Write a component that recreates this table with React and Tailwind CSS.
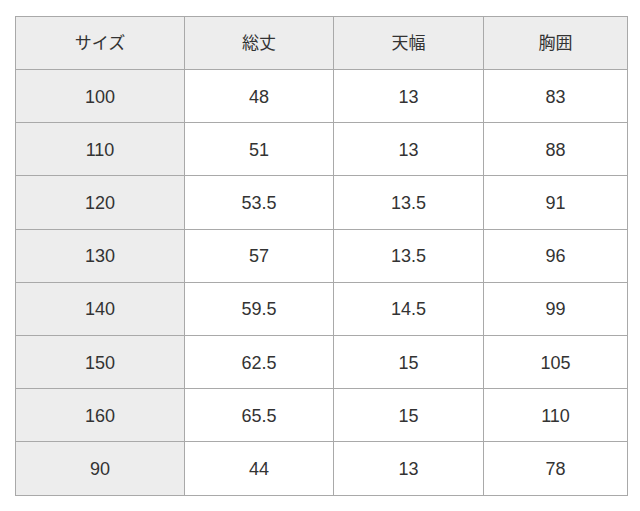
const headers = ['サイズ', '総丈', '天幅', '胸囲'];

const rows = [
  ['100', '48', '13', '83'],
  ['110', '51', '13', '88'],
  ['120', '53.5', '13.5', '91'],
  ['130', '57', '13.5', '96'],
  ['140', '59.5', '14.5', '99'],
  ['150', '62.5', '15', '105'],
  ['160', '65.5', '15', '110'],
  ['90', '44', '13', '78'],
];

export default function App() {
  return (
    <div
      className="w-[640px] h-[511px] bg-white pt-[16px] pl-[15px]"
      style={{ fontFamily: '"Liberation Sans", "Noto Sans CJK JP", sans-serif' }}
    >
      <table className="w-[612px] border-collapse table-fixed text-[18px] text-[#333]">
        <colgroup>
          <col className="w-[169px]" />
          <col className="w-[149px]" />
          <col className="w-[150px]" />
          <col className="w-[144px]" />
        </colgroup>
        <thead>
          <tr className="h-[53px] bg-[#ededed]">
            {headers.map((h) => (
              <th key={h} className="border-[1.5px] border-[#a9a9a9] font-normal text-center text-[17px] pt-[1px]">
                {h}
              </th>
            ))}
          </tr>
        </thead>
        <tbody>
          {rows.map((row) => (
            <tr key={row[0]} className="h-[53.2px]">
              {row.map((cell, i) => (
                <td
                  key={i}
                  className={`border-[1.5px] border-[#a9a9a9] text-center pt-[2px] ${i === 0 ? 'bg-[#ededed]' : 'bg-white'}`}
                >
                  {cell}
                </td>
              ))}
            </tr>
          ))}
        </tbody>
      </table>
    </div>
  );
}
